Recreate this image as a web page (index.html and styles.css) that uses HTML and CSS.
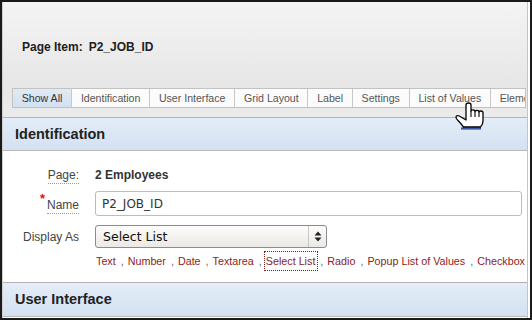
FILE: index.html
```html
<!DOCTYPE html>
<html lang="en">
<head>
    <meta charset="UTF-8">
    <meta name="viewport" content="width=device-width, initial-scale=1.0">
    <title>Page Item: P2_JOB_ID</title>
    <link rel="stylesheet" href="styles.css">
</head>
<body>
    <div class="frame">
        <div class="panel">
            <div class="top">
                <h1 class="item-title">Page Item:<span class="item-name">P2_JOB_ID</span></h1>
                <ul class="tabs">
                    <li class="tab current">Show All</li>
                    <li class="tab">Identification</li>
                    <li class="tab">User Interface</li>
                    <li class="tab">Grid Layout</li>
                    <li class="tab">Label</li>
                    <li class="tab">Settings</li>
                    <li class="tab">List of Values</li>
                    <li class="tab">Element</li>
                </ul>
            </div>

            <h2 class="section-head">Identification</h2>
            <div class="form">
                <div class="row row-page">
                    <span class="label"><span class="help">Page:</span></span>
                    <span class="value">2 Employees</span>
                </div>
                <div class="row row-name">
                    <label class="label" for="name"><span class="req">*</span><span class="help">Name</span></label>
                    <input class="text-field" type="text" id="name" name="name" value="P2_JOB_ID">
                </div>
                <div class="row row-display">
                    <span class="label">Display As</span>
                    <div class="select">
                        <span class="select-text">Select List</span>
                        <span class="select-arrows">
                            <svg width="8" height="11" viewBox="0 0 8 11">
                                <path d="M4 0.5 L7.5 4.5 H0.5 Z M4 10.5 L7.5 6.5 H0.5 Z" fill="#222"/>
                            </svg>
                        </span>
                    </div>
                </div>
                <div class="row row-links">
                    <span></span>
                    <div class="quick-picks">
                        <a href="#">Text</a> , <a href="#">Number</a> , <a href="#">Date</a> , <a href="#">Textarea</a> , <a href="#" class="focused">Select List</a> , <a href="#">Radio</a> , <a href="#">Popup List of Values</a> , <a href="#">Checkbox</a>
                    </div>
                </div>
            </div>

            <h2 class="section-head second">User Interface</h2>
        </div>

        <!-- mouse pointer over the "List of Values" tab -->
        <svg class="cursor" width="34" height="30" viewBox="0 0 34 30">
            <path d="M9 27.5 H29" stroke="#1f3f8f" stroke-width="2.2" opacity="0.85"/>
            <path d="M14 4 Q14 2 16.5 2 Q19 2 19 4 V10 Q19 8.8 21 8.8 Q23 8.8 23 10.5 Q23 9.4 25 9.4 Q27 9.4 27 11 Q27 10 29 10 Q31 10 31 12 V20 Q31 23.5 28.5 26 H11.5 Q9 22.5 6 19.5 Q3 16.5 4.5 15 Q6 13.8 9 16 L14 19 Z"
                  fill="#fff" stroke="#000" stroke-width="1.3" stroke-linejoin="round"/>
            <path d="M19 10 V16 M23 10.5 V16 M27 11 V16" stroke="#000" stroke-width="1.1"/>
        </svg>
    </div>
</body>
</html>
```

FILE: styles.css
```css
body {
    margin: 0;
    font-family: "Liberation Sans", Arial, sans-serif;
    background-color: #fff;
}
.frame {
    position: relative;
    width: 532px;
    height: 320px;
    box-sizing: border-box;
    border: 2px solid #1a1a1a;
    overflow: hidden;
    background: #fff;
}
.panel {
    height: 100%;
    margin-right: 2px;
    border-left: 1px solid #cfcfcf;
    border-right: 1px solid #c4c4c4;
}
.top {
    padding: 38px 0 9px;
    background: linear-gradient(#f4f4f4, #e7e7e7 70%, #ebebeb);
    border-bottom: 1px solid #b4b4b4;
}
.item-title {
    margin: 0 0 0 19px;
    font-size: 12px;
    line-height: 14px;
    font-weight: bold;
    color: #1e1e1e;
}
.item-name {
    margin-left: 6px;
}
.tabs {
    display: flex;
    margin: 34px 1px 0 9px;
    padding: 0;
    list-style: none;
    overflow: hidden;
    border: 1px solid #c2c2c2;
    background: #fafafa;
}
.tab {
    flex: none;
    padding: 0 8.75px;
    font-size: 10.6px;
    line-height: 18px;
    color: #555;
    background: #fbfbfb;
    border-right: 1px solid #c8c8c8;
}
.tab.current {
    color: #333;
    background: linear-gradient(#e1eaf5, #d3e0f0);
}
.section-head {
    margin: 0;
    padding-left: 12px;
    height: 32px;
    line-height: 32px;
    font-size: 14.5px;
    font-weight: bold;
    color: #222;
    background: linear-gradient(#e4edf8, #d4e1f1);
    border-bottom: 1px solid #b9b9b9;
}
.section-head.second {
    height: 33px;
    line-height: 33px;
    border-top: 1px solid #b0b0b0;
}
.form {
    padding: 15px 5px 12px 0;
}
.row {
    display: grid;
    grid-template-columns: 76px 1fr;
    column-gap: 16px;
    align-items: center;
}
.row-page {
    height: 18px;
}
.row-name {
    margin-top: 7px;
    height: 25px;
}
.row-display {
    margin-top: 9px;
    height: 23px;
}
.row-links {
    margin-top: 3px;
    height: 19px;
}
.label {
    text-align: right;
    font-size: 12px;
    color: #444;
}
.help {
    padding-bottom: 1px;
    border-bottom: 1px dotted #9a9a9a;
}
.row-name .label {
    padding-top: 2px;
}
.req {
    position: relative;
    top: -6px;
    margin-right: 2px;
    color: #e01010;
    font-size: 13px;
    font-weight: bold;
}
.value {
    font-size: 12px;
    font-weight: bold;
    color: #333;
}
.text-field {
    box-sizing: border-box;
    width: 100%;
    height: 25px;
    margin: 0;
    padding: 0 6px;
    font-family: "DejaVu Sans", sans-serif;
    font-size: 12px;
    color: #333;
    border: 1px solid #bcbcbc;
    border-radius: 3px;
    background: #fff;
}
.select {
    display: flex;
    align-items: center;
    box-sizing: border-box;
    width: 232px;
    height: 23px;
    border: 1px solid #8c8c8c;
    border-radius: 3px;
    background: linear-gradient(#fdfdfc, #ebe9e4);
    font-family: "DejaVu Sans", sans-serif;
    font-size: 12.5px;
    color: #111;
}
.select-text {
    flex: 1;
    padding-left: 7px;
}
.select-arrows {
    display: flex;
    align-items: center;
    justify-content: center;
    width: 17px;
    height: 100%;
    border-left: 1px solid #c9c7c2;
}
.quick-picks {
    font-size: 10.75px;
    color: #666;
    white-space: nowrap;
}
.quick-picks a {
    color: #8b1d1d;
    text-decoration: none;
    padding: 0 2px 0 1px;
}
.quick-picks a.focused {
    padding: 3px 2px 3px 1px;
    outline: 1px dotted #7a1c1c;
}
.cursor {
    position: absolute;
    left: 450px;
    top: 99px;
}
```
